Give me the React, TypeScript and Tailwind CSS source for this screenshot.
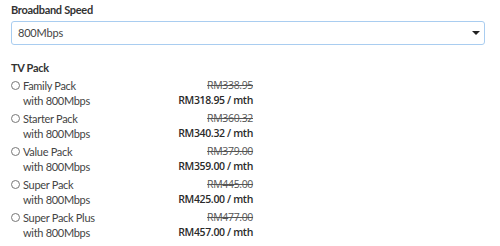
import React, { useState } from "react";

interface Pack {
  name: string;
  was: string;
  now: string;
}

const packs: Pack[] = [
  { name: "Family Pack", was: "RM338.95", now: "RM318.95 / mth" },
  { name: "Starter Pack", was: "RM360.32", now: "RM340.32 / mth" },
  { name: "Value Pack", was: "RM379.00", now: "RM359.00 / mth" },
  { name: "Super Pack", was: "RM445.00", now: "RM425.00 / mth" },
  { name: "Super Pack Plus", was: "RM477.00", now: "RM457.00 / mth" },
];

const App = () => {
  const [speed, setSpeed] = useState("800Mbps");
  const [selected, setSelected] = useState<string | null>(null);

  return (
    <div className="w-[500px] h-[246px] bg-white px-[11px] pt-[2px] font-['Lato','Open_Sans',sans-serif] text-[#3a3a3a] overflow-hidden">
      {/* Broadband speed */}
      <div className="text-[11px] leading-[15px] tracking-[-0.3px] font-bold text-[#333]">
        Broadband Speed
      </div>
      <div className="relative mt-[4px] w-[474px] h-[24px]">
        <select
          value={speed}
          onChange={(e) => setSpeed(e.target.value)}
          className="block appearance-none w-full h-[24px] rounded-[3px] border border-[#a9cdf0] bg-white pl-[6px] text-[11px] tracking-[-0.2px] text-[#444] outline-none"
        >
          <option>100Mbps</option>
          <option>300Mbps</option>
          <option>500Mbps</option>
          <option>800Mbps</option>
        </select>
        <span className="pointer-events-none absolute right-[5px] top-[10px] w-0 h-0 border-l-[4px] border-r-[4px] border-t-[4px] border-l-transparent border-r-transparent border-t-[#222]" />
      </div>

      {/* TV pack */}
      <div className="mt-[15px] text-[11px] leading-[15px] tracking-[-0.3px] font-bold text-[#333]">
        TV Pack
      </div>
      <div className="mt-[3px] flex flex-col gap-[3px] w-[242px]">
        {packs.map((p) => (
          <label
            key={p.name}
            className="flex items-start justify-between cursor-pointer"
            onClick={() => setSelected(p.name)}
          >
            <div className="flex items-start gap-[3px]">
              <span className="mt-[3px] w-[9px] h-[9px] rounded-full border border-[#777] bg-white flex items-center justify-center">
                {selected === p.name && (
                  <span className="w-[5px] h-[5px] rounded-full bg-[#333]" />
                )}
              </span>
              <div className="text-[11px] leading-[15px] tracking-[-0.3px] text-[#444]">
                <div>{p.name}</div>
                <div>with 800Mbps</div>
              </div>
            </div>
            <div className="text-right font-['Open_Sans',sans-serif] leading-[15px] tracking-[-0.35px]">
              <div className="text-[10.5px] text-[#555] line-through">{p.was}</div>
              <div className="text-[10.5px] font-semibold text-[#2a2a2a]">{p.now}</div>
            </div>
          </label>
        ))}
      </div>
    </div>
  );
};

export default App;
